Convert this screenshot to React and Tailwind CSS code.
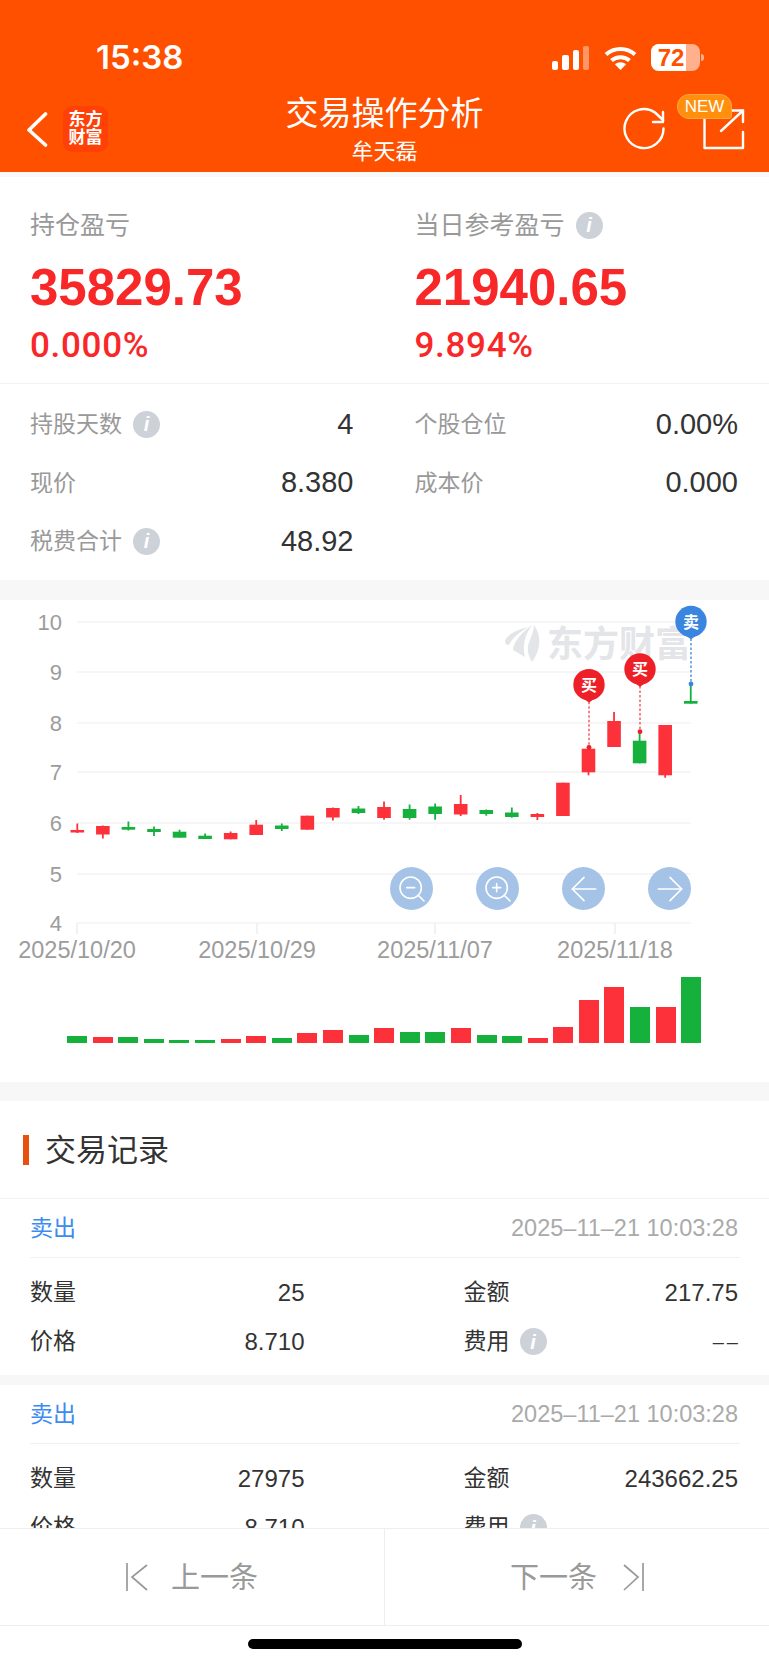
import { ZoomIn, ZoomOut, ArrowLeft, ArrowRight } from "lucide-react";

const RED = "#fd3139";
const GREEN = "#16b13c";

// [up, bodyTop, bodyBottom, wickTop, wickBottom] in page y
const candles = [
  [1, 830, 832.5, 823.5, 833],
  [1, 826, 834.5, 825.5, 838.5],
  [0, 827, 829.7, 821.5, 830.5],
  [0, 829, 832, 826.5, 836],
  [0, 831.7, 837.7, 829.7, 837.7],
  [0, 835.7, 839, 833.5, 839],
  [1, 833, 839.3, 831.5, 839.3],
  [1, 824.7, 835, 820, 835],
  [0, 825.5, 829, 823.5, 831],
  [1, 815.7, 829.7, 815.7, 829.7],
  [1, 808, 817.5, 807.5, 820.5],
  [0, 808.5, 813, 806, 814],
  [1, 807, 818, 801.5, 819.7],
  [0, 809, 818, 804.5, 819.7],
  [0, 806.5, 814, 803.5, 819.7],
  [1, 804, 814.5, 795, 816],
  [0, 810, 814, 809.5, 815.7],
  [0, 812.5, 817, 807.5, 817.7],
  [1, 814, 817, 813, 820],
  [1, 782.7, 816, 782.7, 816],
  [1, 748.7, 772.3, 745.3, 775.3],
  [1, 721, 747, 712, 747],
  [0, 740.7, 763.3, 731.7, 763.3],
  [1, 725, 775.3, 725, 777.7],
  [0, 701, 703.7, 684.3, 703.7],
];

const volumes = [
  [0, 6.7], [1, 6.3], [0, 5.7], [0, 4], [0, 3.3], [0, 2.7], [1, 3.7], [1, 7.3], [0, 4.7],
  [1, 9.7], [1, 12.7], [0, 8.3], [1, 14.7], [0, 10.7], [0, 10.7], [1, 14.7], [0, 8], [0, 6.7],
  [1, 5.3], [1, 16.3], [1, 42.7], [1, 56.3], [0, 36.3], [1, 36.3], [0, 66.3],
];

const grid = [
  ["10", 622],
  ["9", 672],
  ["8", 723],
  ["7", 772],
  ["6", 823],
  ["5", 874],
  ["4", 923],
];

const dates = [
  ["2025/10/20", 77],
  ["2025/10/29", 257],
  ["2025/11/07", 435],
  ["2025/11/18", 615],
];

const pins = [
  { label: "买", x: 589, y: 684.7, dot: 747.3, color: "#ee2027", line: "#f5414a" },
  { label: "买", x: 640, y: 669, dot: 731.7, color: "#ee2027", line: "#f5414a" },
  { label: "卖", x: 691, y: 621.5, dot: 684, color: "#3a85e0", line: "#3a85e0" },
];

const InfoIcon = () => (
  <span className="w-[27px] h-[27px] rounded-full bg-[#cdd1d8] flex items-center justify-center shrink-0 text-white text-[20px] font-bold italic leading-none">
    i
  </span>
);

const StatusBar = () => (
  <div className="h-[92px] pt-[44px] pl-[96px] pr-[65px] flex items-start justify-between text-white">
    <span className="[font-family:Inter,sans-serif] text-[33px] leading-[27px] font-semibold">15:38</span>
    <div className="flex items-center">
      <div className="flex items-end gap-[4px] h-[25px]">
        <div className="w-[6px] h-[9px] rounded-[2px] bg-white" />
        <div className="w-[7px] h-[15px] rounded-[2px] bg-white" />
        <div className="w-[6px] h-[20px] rounded-[2px] bg-white" />
        <div className="w-[6px] h-[24px] rounded-[2px] bg-white/40" />
      </div>
      <svg className="ml-[15px]" width="33" height="24" viewBox="0 0 33 24" fill="none" stroke="white" strokeWidth="4">
        <path d="M2 8.5C10 1 23 1 31 8.5" />
        <path d="M7.5 14.5C12.5 10 20.5 10 25.5 14.5" />
        <path d="M16.5 24L10.8 18.3C14 15.5 19 15.5 22.2 18.3Z" fill="white" stroke="none" />
      </svg>
      <div className="ml-[14px] relative w-[49px] h-[27px] rounded-[8px] bg-white/55 overflow-hidden">
        <div className="h-full w-[35px] bg-white" />
        <span className="absolute inset-0 pr-[9px] flex items-center justify-center text-[#ff5000] text-[24px] font-bold leading-none">72</span>
      </div>
      <div className="ml-[1px] w-[3px] h-[7px] rounded-r-full bg-white/55" />
    </div>
  </div>
);

const NavBar = () => (
  <div className="h-[80px] relative flex items-start justify-center">
    <svg className="absolute left-[26px] top-[20px]" width="22" height="35" viewBox="0 0 22 35" fill="none" stroke="white" strokeWidth="3.6" strokeLinecap="round" strokeLinejoin="round">
      <path d="M19.5 2L3 18L19.5 33" />
    </svg>
    <div className="absolute left-[63px] top-[14px] w-[45px] h-[46px] rounded-[9px] bg-[#ff4108] flex flex-col items-center justify-center text-white text-[17px] font-bold leading-[18px]">
      <span>东方</span>
      <span>财富</span>
    </div>
    <div className="flex flex-col items-center text-white">
      <span className="text-[33px] leading-[38px] mt-[3px]">交易操作分析</span>
      <span className="text-[22px] leading-[28px] mt-[5px]">牟天磊</span>
    </div>
    <svg className="absolute left-[622px] top-[14px]" width="46" height="46" viewBox="0 0 46 46" fill="none" stroke="white" strokeWidth="2.4" strokeLinecap="round" strokeLinejoin="round">
      <path d="M41.5 22.5A19.5 19.5 0 1 1 33 6.5L41 14" />
      <path d="M41 6V16H31" />
    </svg>
    <svg className="absolute left-[702px] top-[16px]" width="44" height="42" viewBox="0 0 44 42" fill="none" stroke="white" strokeWidth="2.4" strokeLinecap="round" strokeLinejoin="round">
      <path d="M2.5 8V40H41V24" />
      <path d="M19 23L41 2.5" />
      <path d="M30 2.5H41V14" />
    </svg>
    <div className="absolute left-[677px] top-[2px] w-[55px] h-[25px] rounded-t-[12px] rounded-bl-[12px] rounded-br-[3px] bg-[#ff8f0c] border border-[#ffa640] flex items-center justify-center text-white text-[17px] leading-none">
      NEW
    </div>
  </div>
);

const SummaryCol = ({ label, value, pct, info }) => (
  <div>
    <div className="flex items-center h-[30px] gap-[11px] text-[25px] text-[#999999] leading-[30px]">
      {label}
      {info && <InfoIcon />}
    </div>
    <div className="mt-[20px] text-[51px] leading-[56px] font-bold text-[#f82828]">{value}</div>
    <div className="mt-[10px] [font-family:Roboto,sans-serif] text-[35px] tracking-[0.7px] leading-[40px] font-medium text-[#f82828]">{pct}</div>
  </div>
);

const StatRow = ({ label, value, info }) => (
  <div className="h-[58.5px] flex items-center justify-between">
    <span className="flex items-center gap-[11px] text-[23px] text-[#999999]">
      {label}
      {info && <InfoIcon />}
    </span>
    <span className="text-[29px] text-[#333333]">{value}</span>
  </div>
);

const Chart = () => (
  <div className="relative h-[482px]">
    <svg width="769" height="375" viewBox="0 600 769 375" className="block">
      {grid.map(([label, y]) => (
        <g key={label}>
          <line x1="77" x2="691" y1={y} y2={y} stroke="#f3f3f3" strokeWidth="1.5" />
          <text x="62" y={y + 8} textAnchor="end" fontSize="22" fill="#9c9c9c">{label}</text>
        </g>
      ))}
      {dates.map(([label, x]) => (
        <g key={label}>
          <line x1={x} x2={x} y1="923" y2="934" stroke="#eeeeee" strokeWidth="1.5" />
          <text x={x} y="958" textAnchor="middle" fontSize="23.5" fill="#9c9c9c">{label}</text>
        </g>
      ))}
      {/* watermark */}
      <g fill="#e4e5e9">
        <path d="M528 627C516 630 507 635 505 641C505 644 507 645 509 645C512 638 520 632 528 627Z" />
        <path d="M532 625C522 632 513 642 513 650L525 657C522 645 525 635 532 625Z" />
        <path d="M534 625C541 635 542 648 532 662C528 655 526 648 530 640C532 635 534 630 534 625Z" />
        <text x="547" y="657" fontSize="36" fontWeight="700">东方财富</text>
      </g>
      {candles.map(([up, top, bottom, wickTop, wickBottom], i) => {
        const x = 77.3 + i * 25.56;
        const color = up ? RED : GREEN;
        return (
          <g key={i} fill={color}>
            <rect x={x - 0.9} y={wickTop} width="1.8" height={wickBottom - wickTop} />
            <rect x={x - 6.8} y={top} width="13.6" height={bottom - top} />
          </g>
        );
      })}
      {pins.map((pin) => (
        <g key={pin.x}>
          <line x1={pin.x} x2={pin.x} y1={pin.y + 17} y2={pin.dot} stroke={pin.line} strokeWidth="1.3" strokeDasharray="2.5 2" />
          <circle cx={pin.x} cy={pin.dot} r="2.4" fill={pin.color} />
          <circle cx={pin.x} cy={pin.y} r="15.7" fill={pin.color} />
          <path d={`M${pin.x - 7} ${pin.y + 13}L${pin.x} ${pin.y + 17.7}L${pin.x + 7} ${pin.y + 13}Z`} fill={pin.color} />
          <text x={pin.x} y={pin.y + 6} textAnchor="middle" fontSize="16" fontWeight="700" fill="white">{pin.label}</text>
        </g>
      ))}
    </svg>

    <div className="h-[68px] pl-[67px] flex items-end gap-[5.6px]">
      {volumes.map(([up, h], i) => (
        <div key={i} className={`w-[20px] ${up ? "bg-[#fd3139]" : "bg-[#16b13c]"}`} style={{ height: h }} />
      ))}
    </div>

    <div className="absolute left-[390px] top-[267px] flex gap-[43px]">
      <div className="w-[43px] h-[43px] rounded-full bg-[#a5c3e6] flex items-center justify-center">
        <ZoomOut size={32} color="white" strokeWidth={1.2} />
      </div>
      <div className="w-[43px] h-[43px] rounded-full bg-[#a5c3e6] flex items-center justify-center">
        <ZoomIn size={32} color="white" strokeWidth={1.2} />
      </div>
      <div className="w-[43px] h-[43px] rounded-full bg-[#a5c3e6] flex items-center justify-center">
        <ArrowLeft size={40} color="white" strokeWidth={1} />
      </div>
      <div className="w-[43px] h-[43px] rounded-full bg-[#a5c3e6] flex items-center justify-center">
        <ArrowRight size={40} color="white" strokeWidth={1} />
      </div>
    </div>
  </div>
);

const Record = ({ qty, amount }) => (
  <div>
    <div className="h-[58px] pt-[1px] pl-[30px] pr-[31px] flex items-center justify-between">
      <span className="text-[23px] text-[#3d8bf0]">卖出</span>
      <span className="text-[23.5px] text-[#aaaaaa]">2025–11–21 10:03:28</span>
    </div>
    <div className="ml-[30px] mr-[29px] h-px bg-[#f1f1f1]" />
    <div className="pt-[10px] pb-[9px] pl-[30px] pr-[31px] grid grid-cols-2 gap-x-[159px] text-[23px] text-[#333333]">
      <div className="h-[49px] flex items-center justify-between">
        <span>数量</span>
        <span className="text-[24px]">{qty}</span>
      </div>
      <div className="h-[49px] flex items-center justify-between">
        <span>金额</span>
        <span className="text-[24px]">{amount}</span>
      </div>
      <div className="h-[49px] flex items-center justify-between">
        <span>价格</span>
        <span className="text-[24px]">8.710</span>
      </div>
      <div className="h-[49px] flex items-center justify-between">
        <span className="flex items-center gap-[10px]">
          费用
          <InfoIcon />
        </span>
        <span className="text-[20px] tracking-[3px] -mr-[3px]">––</span>
      </div>
    </div>
  </div>
);

export default function App() {
  return (
    <div className="w-[769px] h-[1665px] flex flex-col overflow-hidden bg-white [font-family:'Liberation_Sans','Noto_Sans_CJK_SC',sans-serif]">
      <div className="h-[172px] shrink-0 bg-[#ff5000]">
        <StatusBar />
        <NavBar />
      </div>
      <div className="h-[5px] shrink-0 bg-[#f8f8f8]" />

      <div className="flex-1 min-h-0 overflow-hidden">
        <div className="h-[207px] pt-[33px] pl-[30px] pr-[31px] grid grid-cols-2 gap-x-[61px] border-b border-[#f3f3f3]">
          <SummaryCol label="持仓盈亏" value="35829.73" pct="0.000%" />
          <SummaryCol label="当日参考盈亏" value="21940.65" pct="9.894%" info />
        </div>

        <div className="h-[196px] pt-[11px] pl-[30px] pr-[31px] grid grid-cols-2 gap-x-[61px] content-start">
          <StatRow label="持股天数" value="4" info />
          <StatRow label="个股仓位" value="0.00%" />
          <StatRow label="现价" value="8.380" />
          <StatRow label="成本价" value="0.000" />
          <StatRow label="税费合计" value="48.92" info />
        </div>

        <div className="h-[20px] bg-[#f7f7f7]" />
        <Chart />
        <div className="h-[19px] bg-[#f7f7f7]" />

        <div className="h-[98px] pt-[3px] flex items-center border-b border-[#f3f3f3]">
          <div className="ml-[23px] -mt-[3px] w-[6px] h-[30px] bg-[#e8500f]" />
          <span className="ml-[16px] text-[31px] text-[#333333]">交易记录</span>
        </div>

        <Record qty="25" amount="217.75" />
        <div className="h-[10px] bg-[#f7f7f7]" />
        <Record qty="27975" amount="243662.25" />
      </div>

      <div className="h-[98px] shrink-0 flex border-y border-[#eeeeee] text-[29px] text-[#999999]">
        <div className="flex-1 flex items-center justify-center gap-[23px] border-r border-[#eeeeee]">
          <svg width="22" height="28" viewBox="0 0 22 28" fill="none" stroke="#999999" strokeWidth="1.7">
            <path d="M1 0V28" />
            <path d="M21 2L6 14L21 27" />
          </svg>
          <span className="mt-[3px]">上一条</span>
        </div>
        <div className="flex-1 flex items-center justify-center gap-[26px]">
          <span className="mt-[3px]">下一条</span>
          <svg width="21" height="28" viewBox="0 0 21 28" fill="none" stroke="#999999" strokeWidth="1.7">
            <path d="M20 0V28" />
            <path d="M1 2L15 14L1 27" />
          </svg>
        </div>
      </div>

      <div className="h-[39px] shrink-0 flex justify-center pt-[13px]">
        <div className="w-[274px] h-[10px] rounded-full bg-black" />
      </div>
    </div>
  );
}
